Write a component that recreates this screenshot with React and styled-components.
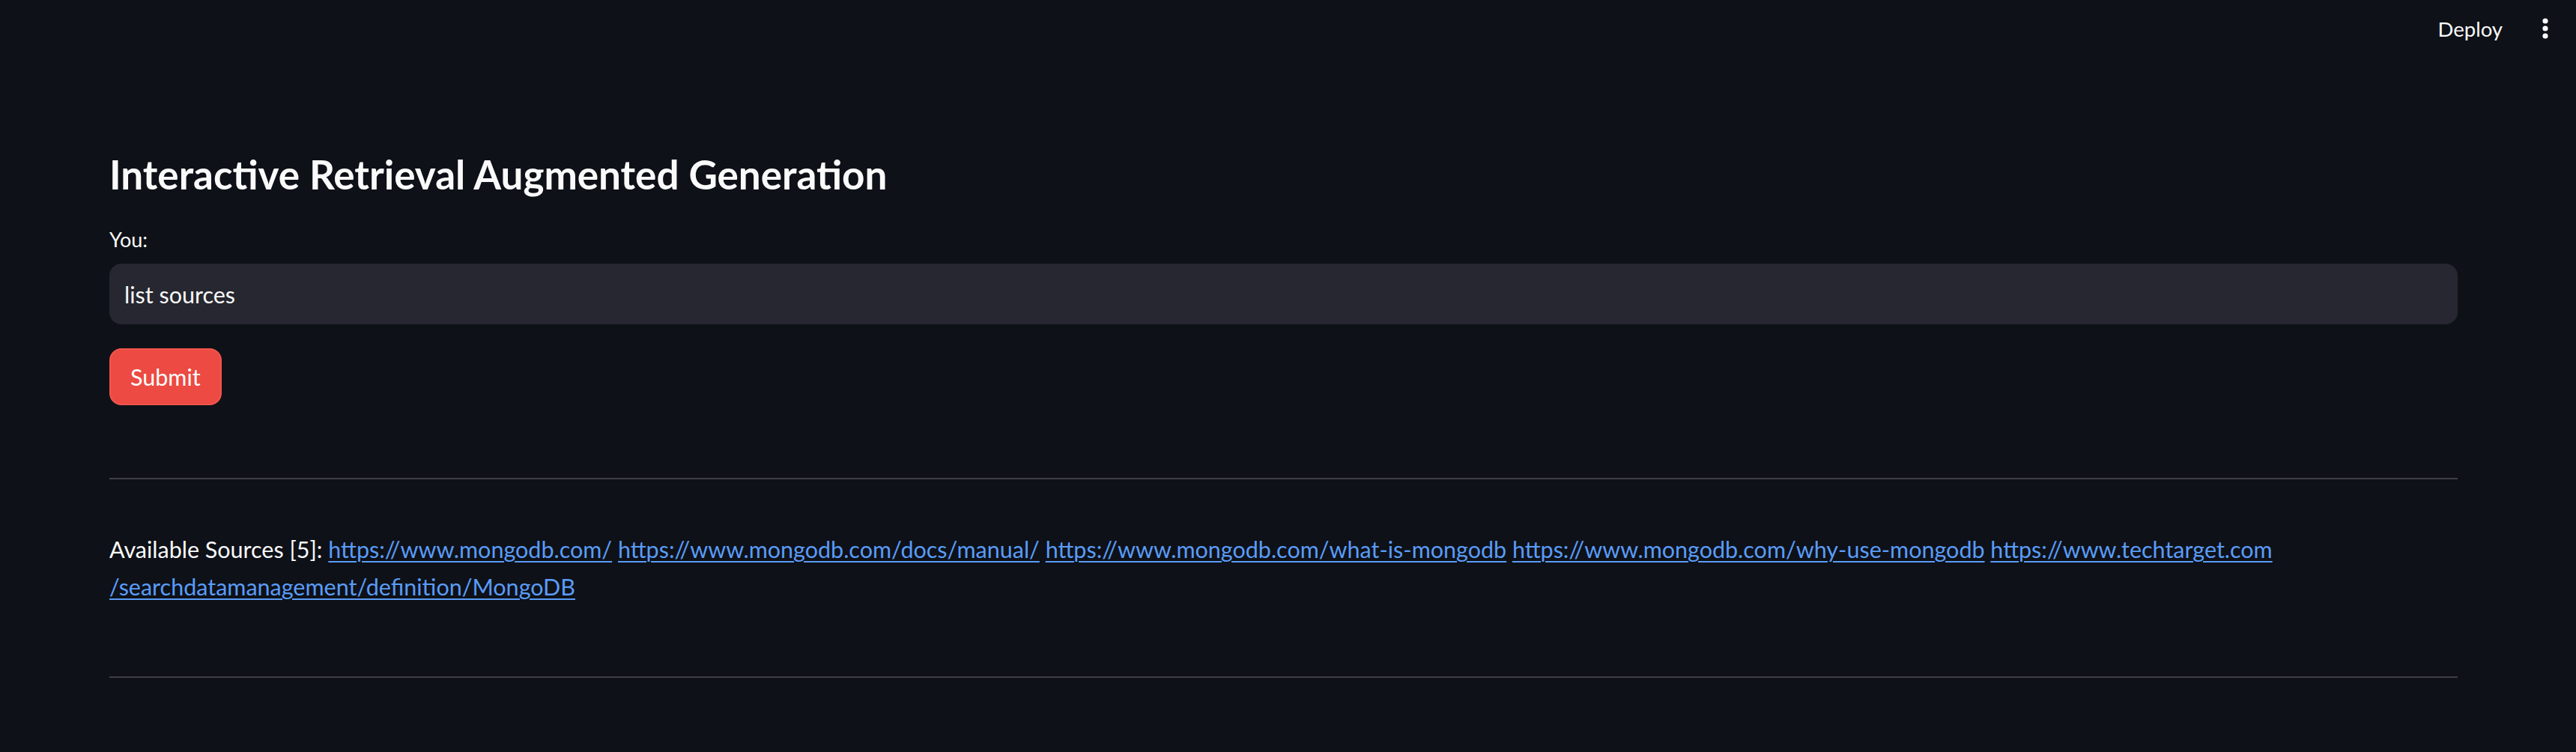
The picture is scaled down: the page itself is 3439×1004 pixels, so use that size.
import React from 'react'
import styled, { createGlobalStyle } from 'styled-components'

const GlobalStyle = createGlobalStyle`
  html, body {
    margin: 0;
    padding: 0;
    background: #0e1117;
    color: #fafafa;
    font-family: Lato, "Noto Sans", sans-serif;
  }
`

const Page = styled.div`
  min-height: 1004px;
  background: #0e1117;
`

const Header = styled.header`
  height: 76px;
  display: flex;
  align-items: center;
  justify-content: flex-end;
  padding-right: 36px;
  gap: 52px;
`

const HeaderButton = styled.button`
  background: none;
  border: none;
  color: #fafafa;
  font-family: inherit;
  font-size: 27.5px;
  padding: 0;
  cursor: pointer;
`

const MenuButton = styled.button`
  background: none;
  border: none;
  padding: 0;
  display: flex;
  align-items: center;
  cursor: pointer;
`

const Main = styled.main`
  padding: 123px 158px 0 146px;
  display: flex;
  flex-direction: column;
`

const Title = styled.h2`
  margin: 0;
  font-size: 53px;
  line-height: 67px;
  font-weight: 700;
  color: #fafafa;
`

const Label = styled.label`
  margin-top: 33px;
  font-size: 27px;
  line-height: 42px;
  color: #fafafa;
`

const Input = styled.input`
  margin-top: 11px;
  height: 81px;
  box-sizing: border-box;
  border: none;
  border-radius: 16px;
  background: #262730;
  color: #fafafa;
  font-family: inherit;
  font-size: 30.5px;
  padding: 0 20px;
  outline: none;
`

const SubmitButton = styled.button`
  margin-top: 32px;
  align-self: flex-start;
  height: 76px;
  padding: 0 26px;
  border: 2px solid #f0564e;
  border-radius: 16px;
  background: #ec4a42;
  color: #fff;
  font-family: inherit;
  font-size: 30.5px;
  cursor: pointer;
`

const Divider = styled.hr`
  margin: ${p => p.top}px 0 0;
  border: none;
  height: 2px;
  background: #3d3f45;
`

const Sources = styled.p`
  margin: 68px 0 0;
  font-size: 30.5px;
  line-height: 50px;
  color: #fafafa;
`

const SourceLink = styled.a`
  color: #5a9cf8;
  text-decoration: underline;
  text-decoration-thickness: 2px;
  text-underline-offset: 4px;
`

const DotsIcon = () => (
  <svg width="10" height="32" viewBox="0 0 10 32">
    <circle cx="5" cy="6" r="3.6" fill="#fafafa" />
    <circle cx="5" cy="16" r="3.6" fill="#fafafa" />
    <circle cx="5" cy="26" r="3.6" fill="#fafafa" />
  </svg>
)

const sources = [
  'https://www.mongodb.com/',
  'https://www.mongodb.com/docs/manual/',
  'https://www.mongodb.com/what-is-mongodb',
  'https://www.mongodb.com/why-use-mongodb',
]

export default function App() {
  return (
    <Page>
      <GlobalStyle />
      <Header>
        <HeaderButton>Deploy</HeaderButton>
        <MenuButton>
          <DotsIcon />
        </MenuButton>
      </Header>
      <Main>
        <Title>Interactive Retrieval Augmented Generation</Title>
        <Label>You:</Label>
        <Input defaultValue="list sources" />
        <SubmitButton>Submit</SubmitButton>
        <Divider top={97} />
        <Sources>
          Available Sources [5]:{' '}
          {sources.map((src, i) => (
            <React.Fragment key={i}>
              <SourceLink href={src}>{src}</SourceLink>{' '}
            </React.Fragment>
          ))}
          <SourceLink href="https://www.techtarget.com/searchdatamanagement/definition/MongoDB">
            https://www.techtarget.com<wbr />/searchdatamanagement/definition/MongoDB
          </SourceLink>
        </Sources>
        <Divider top={95} />
      </Main>
    </Page>
  )
}
